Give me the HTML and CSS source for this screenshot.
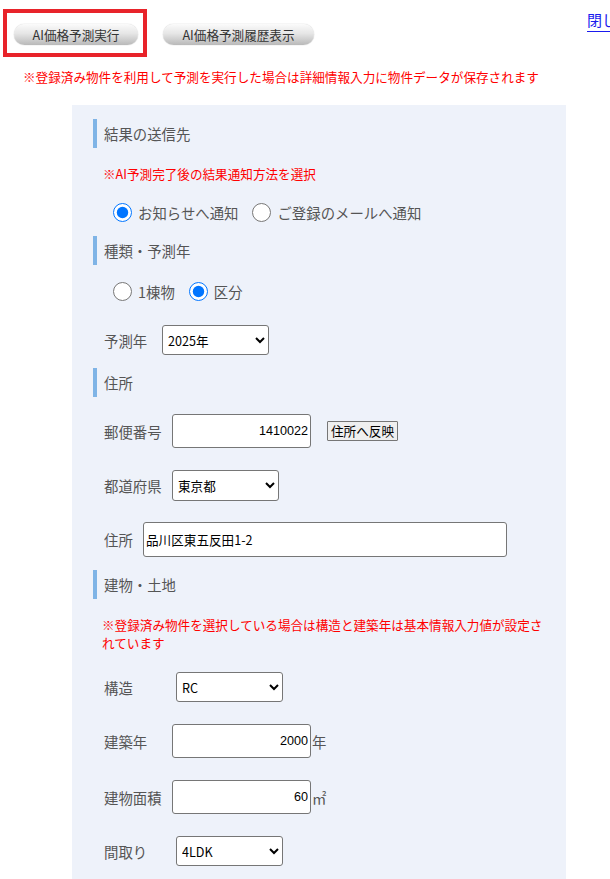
FILE: index.html
```html
<!DOCTYPE html>
<html lang="ja">
<head>
<meta charset="utf-8">
<title>AI価格予測</title>
<link rel="stylesheet" href="styles.css">
</head>
<body>
<div class="page">
  <div class="toprow">
    <div class="selected-box">
      <button class="pill pill-run" type="button">AI価格予測実行</button>
    </div>
    <button class="pill pill-hist" type="button">AI価格予測履歴表示</button>
    <a class="close-link" href="#">閉じる</a>
  </div>
  <p class="top-note">※登録済み物件を利用して予測を実行した場合は詳細情報入力に物件データが保存されます</p>

  <div class="panel">
    <div class="sec-head">結果の送信先</div>
    <p class="note note-1">※AI予測完了後の結果通知方法を選択</p>
    <div class="radios radios-1">
      <label class="radio"><input type="radio" name="notify" checked><span>お知らせへ通知</span></label>
      <label class="radio"><input type="radio" name="notify"><span>ご登録のメールへ通知</span></label>
    </div>

    <div class="sec-head sec-2">種類・予測年</div>
    <div class="radios radios-2">
      <label class="radio"><input type="radio" name="kind"><span>1棟物</span></label>
      <label class="radio"><input type="radio" name="kind" checked><span>区分</span></label>
    </div>
    <div class="row row-year">
      <span class="lbl w58">予測年</span>
      <select class="sel sel-year"><option>2025年</option></select>
    </div>

    <div class="sec-head sec-3">住所</div>
    <div class="row row-zip">
      <span class="lbl w68">郵便番号</span>
      <input class="inp inp-num" type="text" value="1410022">
      <button class="plain-btn" type="button">住所へ反映</button>
    </div>
    <div class="row row-pref">
      <span class="lbl w68">都道府県</span>
      <select class="sel sel-pref"><option>東京都</option></select>
    </div>
    <div class="row row-addr">
      <span class="lbl w39">住所</span>
      <input class="inp inp-addr" type="text" value="品川区東五反田1-2">
    </div>

    <div class="sec-head sec-4">建物・土地</div>
    <p class="note note-2">※登録済み物件を選択している場合は構造と建築年は基本情報入力値が設定されています</p>
    <div class="row row-struct">
      <span class="lbl w72">構造</span>
      <select class="sel"><option>RC</option></select>
    </div>
    <div class="row row-built">
      <span class="lbl w68">建築年</span>
      <input class="inp inp-num" type="text" value="2000"><span class="unit">年</span>
    </div>
    <div class="row row-area">
      <span class="lbl w68">建物面積</span>
      <input class="inp inp-num" type="text" value="60"><span class="unit">㎡</span>
    </div>
    <div class="row row-plan">
      <span class="lbl w72">間取り</span>
      <select class="sel"><option>4LDK</option></select>
    </div>
  </div>
</div>
</body>
</html>
```

FILE: styles.css
```css
html, body {
  margin: 0;
  padding: 0;
  overflow-x: hidden;
  background: #ffffff;
}

body {
  font-family: "Noto Sans CJK JP", "Noto Sans", sans-serif;
  color: #555555;
  font-size: 14.4px;
}

.page {
  padding-top: 9px;
  width: 610px;
}

.toprow {
  display: flex;
  align-items: flex-start;
  padding-left: 3px;
  width: 700px;
}

.selected-box {
  border: 4px solid #e8232a;
  padding: 11px 5px 8px 7px;
  height: 21px;
}

.pill {
  height: 21px;
  border: none;
  border-radius: 11px;
  background: linear-gradient(to bottom, #fbfbfb 0%, #e6e6e6 45%, #b9b9b9 100%);
  box-shadow: 0 0 1px rgba(0, 0, 0, 0.35);
  color: #333333;
  font-family: "Noto Sans CJK JP", sans-serif;
  font-size: 12.6px;
  line-height: 21px;
  padding: 0;
  text-align: center;
}

.pill-run {
  width: 124px;
  display: block;
}

.pill-hist {
  width: 151px;
  margin-left: 16px;
  margin-top: 15px;
}

.close-link {
  margin-left: 273px;
  margin-top: 1px;
  color: #1a1aee;
  font-size: 15px;
  line-height: 20px;
  text-decoration: underline;
  text-underline-offset: 5px;
  white-space: nowrap;
}

.top-note {
  margin: 0;
  padding-left: 23px;
  margin-top: 11px;
  color: #ff0000;
  font-size: 12.6px;
  line-height: 18px;
  white-space: nowrap;
}

.panel {
  margin-left: 72px;
  margin-top: 19px;
  width: 456px;
  padding: 14px 17px 30px 21px;
  background: #eef2fa;
}

.sec-head {
  height: 29px;
  border-left: 4px solid #7fb4e6;
  padding-left: 7px;
  display: flex;
  align-items: center;
  font-size: 14.4px;
  color: #555555;
}

.sec-2 { margin-top: 12px; }
.sec-3 { margin-top: 13px; }
.sec-4 { margin-top: 13px; }

.note {
  margin: 0;
  color: #ff0000;
  font-size: 12.6px;
  line-height: 18px;
}

.note-1 {
  margin-top: 17px;
  padding-left: 10px;
}

.note-2 {
  margin-top: 17px;
  padding-left: 9px;
}

.radios {
  display: flex;
  align-items: center;
  height: 24px;
  padding-left: 20px;
}

.radios-1 { margin-top: 17px; }
.radios-2 { margin-top: 14px; }

.radio {
  display: flex;
  align-items: center;
  margin-right: 14px;
  font-size: 14.4px;
  color: #555555;
}

.radio input {
  width: 19px;
  height: 19px;
  margin: 0 6px 0 0;
  accent-color: #0075ff;
}

.row {
  display: flex;
  align-items: center;
  padding-left: 11px;
}

.lbl {
  font-size: 14.4px;
  color: #555555;
  flex: none;
}

.w39 { width: 39px; }
.w58 { width: 58px; }
.w68 { width: 68px; }
.w72 { width: 72px; }

.row-year { margin-top: 22px; height: 30px; }
.row-zip { margin-top: 17px; height: 34px; }
.row-pref { margin-top: 22px; height: 31px; }
.row-addr { margin-top: 21px; height: 35px; }
.row-struct { margin-top: 20px; height: 30px; }
.row-built { margin-top: 22px; height: 34px; }
.row-area { margin-top: 22px; height: 34px; }
.row-plan { margin-top: 22px; height: 30px; }

.sel {
  width: 107px;
  height: 30px;
  border: 1px solid #767676;
  border-radius: 3px;
  background: #ffffff;
  color: #000000;
  font-family: "Noto Sans CJK JP", sans-serif;
  font-size: 12.6px;
  padding-left: 1px;
}

.sel-pref { height: 31px; }

.inp {
  box-sizing: border-box;
  height: 34px;
  border: 1px solid #767676;
  border-radius: 3px;
  background: #ffffff;
  color: #000000;
  font-family: "Liberation Sans", "Noto Sans CJK JP", sans-serif;
  font-size: 12.6px;
  padding: 0 2px;
  margin: 0;
}

.inp-num {
  width: 139px;
  text-align: right;
}

.inp-addr {
  width: 364px;
  height: 35px;
  font-family: "Noto Sans CJK JP", sans-serif;
}

.plain-btn {
  margin-left: 16px;
  width: 71px;
  height: 20px;
  padding: 0;
  border: 1px solid #767676;
  border-radius: 1px;
  background: #efefef;
  color: #000000;
  font-family: "Noto Sans CJK JP", sans-serif;
  font-size: 12.6px;
  line-height: 18px;
}

.unit {
  margin-left: 1px;
  font-size: 14.4px;
  color: #555555;
}
```
